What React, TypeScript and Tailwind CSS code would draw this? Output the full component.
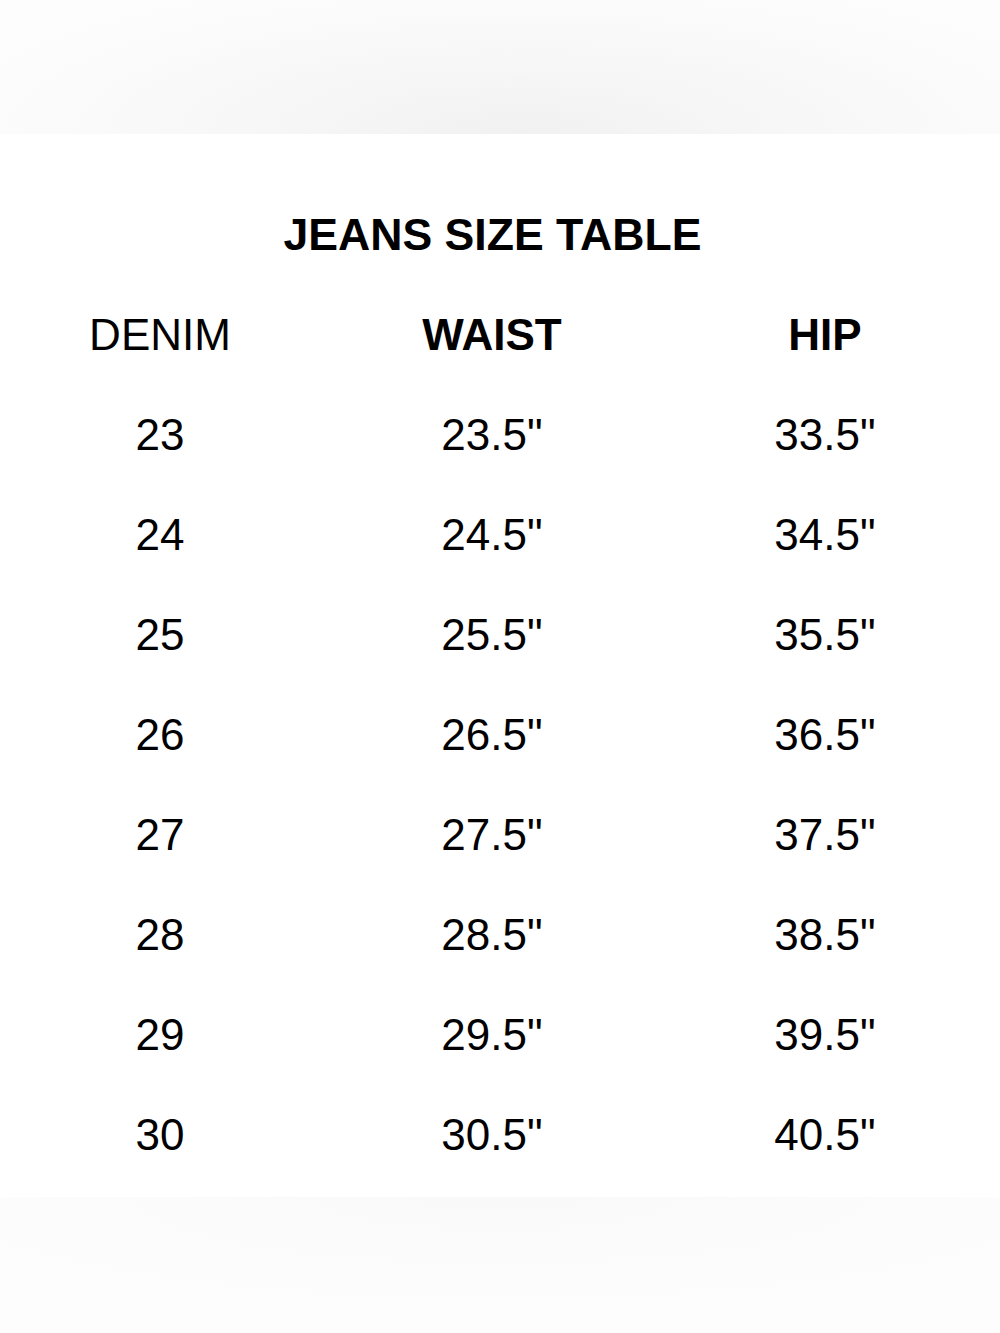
const rows: [string, string, string][] = [
  ["23", '23.5"', '33.5"'],
  ["24", '24.5"', '34.5"'],
  ["25", '25.5"', '35.5"'],
  ["26", '26.5"', '36.5"'],
  ["27", '27.5"', '37.5"'],
  ["28", '28.5"', '38.5"'],
  ["29", '29.5"', '39.5"'],
  ["30", '30.5"', '40.5"'],
];

const grid = "grid grid-cols-[320px_344px_322px] text-center";

export default function App() {
  return (
    <div className="flex h-[1333px] w-[1000px] flex-col bg-white font-['Liberation_Sans',Arial,sans-serif] text-[44px] text-black">
      <div className="h-[134px] bg-[radial-gradient(ellipse_60%_120%_at_52%_100%,#f1f1f1_0%,#f7f7f7_45%,#fdfdfd_100%)]" />

      <div className="pt-[51px]">
        <h1 className="h-[100px] pr-[15px] text-center text-[44.6px] leading-[100px] font-bold">
          JEANS SIZE TABLE
        </h1>

        <div className={`${grid} h-[100px] leading-[100px]`}>
          <div className="font-normal">DENIM</div>
          <div className="font-bold">WAIST</div>
          <div className="font-bold">HIP</div>
        </div>

        {rows.map(([denim, waist, hip]) => (
          <div key={denim} className={`${grid} h-[100px] leading-[100px]`}>
            <div>{denim}</div>
            <div>{waist}</div>
            <div>{hip}</div>
          </div>
        ))}
      </div>

      <div className="mt-[12px] flex-1 bg-[radial-gradient(ellipse_60%_80%_at_50%_0%,#f9f9f9_0%,#fbfbfb_50%,#fdfdfd_100%)]" />
    </div>
  );
}
